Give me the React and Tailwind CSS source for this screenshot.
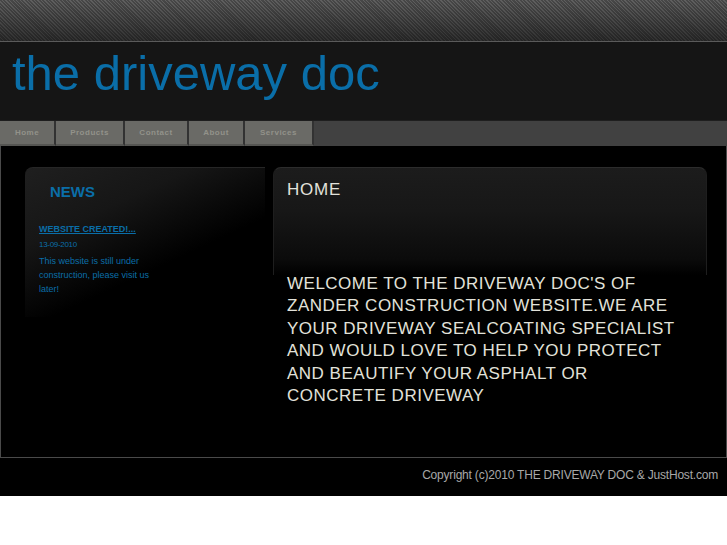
const navItems = ["Home", "Products", "Contact", "About", "Services"];
const navWidths = ["w-[56px]", "w-[69px]", "w-[64px]", "w-[56px]", "w-[69px]"];

export default function App() {
  return (
    <div className="w-[727px] bg-white font-['Liberation_Sans',Arial,sans-serif]">
      {/* striped top band */}
      <div className="h-[41px] bg-[linear-gradient(to_bottom,rgba(0,0,0,0)_0%,rgba(0,0,0,0.5)_100%),repeating-linear-gradient(45deg,#606060_0px,#606060_1px,#474747_1px,#474747_2.5px)]" />
      <div className="h-px bg-[#5a5a5a]" />

      {/* header */}
      <div className="h-[78px] bg-[#151515] pl-[12px] pt-[2px]">
        <h1 className="text-[49px] leading-[58px] text-[#0a6ea8]">the driveway doc</h1>
      </div>

      {/* nav */}
      <div className="flex h-[26px] border-t border-[#1e1e1e] bg-[#414141]">
        {navItems.map((item, i) => (
          <div
            key={item}
            className={`${navWidths[i]} flex items-center justify-center border-r-2 border-b-2 border-r-[#323232] border-b-[#555552] bg-[#6a6a66] pt-[1px] text-[8px] font-bold tracking-[0.5px] text-[#92928a]`}
          >
            {item}
          </div>
        ))}
      </div>

      {/* main */}
      <div className="flex h-[312px] border-x border-b border-[#4a4a4a] bg-black pt-[21px]">
        <div className="w-[272px] shrink-0 pl-[24px]">
          <div className="h-[150px] w-[240px] rounded-tl-lg border-t border-[#262626] bg-[linear-gradient(155deg,#1f1f1f_0%,#161616_30%,#000_62%)] pl-[14px] pt-[14px]">
            <h2 className="pl-[11px] text-[15px] font-bold leading-[20px] text-[#0a6ea8]">NEWS</h2>
            <a href="#" className="mt-[21px] block text-[9px] font-bold leading-[12px] text-[#0a6ea8] underline">
              WEBSITE CREATED!...
            </a>
            <p className="mt-[5px] text-[8px] leading-[10px] tracking-[-0.3px] text-[#0a6ea8]">13-09-2010</p>
            <p className="mt-[4px] w-[125px] text-[9px] leading-[14px] text-[#0a6ea8]">
              This website is still under construction, please visit us later!
            </p>
          </div>
        </div>

        <div className="flex-1">
          <div className="mr-[19px] h-[108px] rounded-t-lg border-x border-t border-x-[#1e1e1e] border-t-[#2c2c2c] bg-[linear-gradient(to_bottom,#1c1c1c_0%,#171717_40%,#0b0b0b_85%,#000_100%)] pl-[13px] pt-[11px]">
            <h2 className="text-[17px] leading-[22px] tracking-[0.8px] text-[#e2e2dc]">HOME</h2>
          </div>
          <p className="mt-[-2px] w-[410px] pl-[14px] text-[17px] leading-[22.4px] tracking-[0.5px] text-[#e2e2da]">
            WELCOME TO THE DRIVEWAY DOC'S OF ZANDER CONSTRUCTION WEBSITE.WE ARE YOUR DRIVEWAY SEALCOATING SPECIALIST AND WOULD LOVE TO HELP YOU PROTECT AND BEAUTIFY YOUR ASPHALT OR CONCRETE DRIVEWAY
          </p>
        </div>
      </div>

      {/* footer */}
      <div className="flex h-[38px] items-center justify-end bg-black pb-[4px] pr-[9px]">
        <p className="text-[12px] tracking-[-0.2px] text-[#a8a8a8]">Copyright (c)2010 THE DRIVEWAY DOC &amp; JustHost.com</p>
      </div>
      <div className="h-[50px] bg-white" />
    </div>
  );
}
